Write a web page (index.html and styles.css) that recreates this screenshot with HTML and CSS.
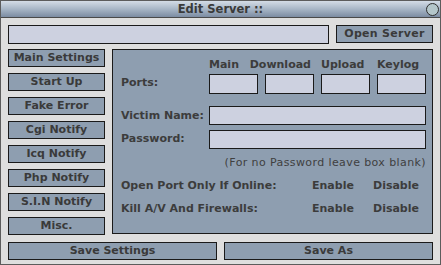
FILE: index.html
```html
<!DOCTYPE html>
<html lang="en">
<head>
  <meta charset="UTF-8" />
  <title>Edit Server</title>
  <link rel="stylesheet" href="styles.css">
</head>
<body>
  <div class="window">
    <!-- title bar -->
    <div class="titlebar">
      <span></span>
      <span class="title">Edit Server ::</span>
      <span class="close"></span>
    </div>

    <div class="content">
      <div class="row top-row">
        <div class="field path"></div>
        <div class="btn open-btn">Open Server</div>
      </div>

      <div class="row middle">
        <div class="menu">
          <div class="btn">Main Settings</div>
          <div class="btn">Start Up</div>
          <div class="btn">Fake Error</div>
          <div class="btn">Cgi Notify</div>
          <div class="btn">Icq Notify</div>
          <div class="btn">Php Notify</div>
          <div class="btn">S.I.N Notify</div>
          <div class="btn">Misc.</div>
        </div>

        <div class="panel">
          <div class="form-row heads">
            <span></span>
            <div class="ports">
              <span>Main</span>
              <span class="wide">Download</span>
              <span>Upload</span>
              <span>Keylog</span>
            </div>
          </div>
          <div class="form-row port-row">
            <span class="label">Ports:</span>
            <div class="ports">
              <div class="field"></div>
              <div class="field"></div>
              <div class="field"></div>
              <div class="field"></div>
            </div>
          </div>
          <div class="form-row victim-row">
            <span class="label">Victim Name:</span>
            <div class="field"></div>
          </div>
          <div class="form-row pass-row">
            <span class="label">Password:</span>
            <div class="field"></div>
          </div>
          <div class="note">(For no Password leave box blank)</div>
          <div class="option first">
            <span>Open Port Only If Online:</span>
            <span>Enable</span>
            <span>Disable</span>
          </div>
          <div class="option">
            <span>Kill A/V And Firewalls:</span>
            <span>Enable</span>
            <span>Disable</span>
          </div>
        </div>
      </div>

      <div class="row bottom-row">
        <div class="btn">Save Settings</div>
        <div class="btn">Save As</div>
      </div>
    </div>
  </div>
</body>
</html>
```

FILE: styles.css
```css
html, body {
  margin: 0;
  padding: 0;
  background: #dedede;
  font-family: "DejaVu Sans", Verdana, sans-serif;
  font-size: 11px;
  font-weight: bold;
  color: #3c3c3c;
}

.window {
  width: 441px;
  height: 265px;
  box-sizing: border-box;
  border: 1px solid #5c5c5c;
  border-top: none;
  background: #dedede;
  display: flex;
  flex-direction: column;
}

.titlebar {
  height: 16px;
  border-top: 1px solid #5c5c5c;
  border-bottom: 1px solid #4a4a4a;
  background: linear-gradient(#d4dce6, #a8b6c6 50%, #7c8ca2);
  display: grid;
  grid-template-columns: 1fr auto 1fr;
  align-items: center;
}

.title {
  font-size: 11.5px;
  color: #3a3a3a;
  line-height: 16px;
}

.close {
  justify-self: end;
  width: 11px;
  height: 11px;
  margin-right: 1px;
  border: 1px solid #2e2e2e;
  border-radius: 50%;
  background: #b4c6ca;
}

.content {
  padding: 7px 5px 0 7px;
  display: flex;
  flex-direction: column;
}

.row {
  display: flex;
  gap: 7px;
}

.field {
  box-sizing: border-box;
  border: 1px solid #1a1a1a;
  background: #cdd1e0;
}

.btn {
  box-sizing: border-box;
  height: 18px;
  border: 1px solid #1a1a1a;
  background: #8e9eb0;
  color: #3a3a3a;
  text-align: center;
  line-height: 16px;
}

.top-row .path {
  width: 321px;
  height: 19px;
}

.open-btn {
  width: 97px;
  letter-spacing: 0.3px;
}

.middle {
  margin-top: 5px;
}

.menu {
  width: 97px;
  display: flex;
  flex-direction: column;
  gap: 6px;
}

.panel {
  width: 321px;
  height: 185px;
  box-sizing: border-box;
  border: 1px solid #1a1a1a;
  background: #8e9eb0;
  padding: 8px 6px 0 8px;
}

.form-row {
  display: grid;
  grid-template-columns: 88px 1fr;
  align-items: center;
}

.ports {
  display: grid;
  grid-template-columns: repeat(4, 49px);
  gap: 7px;
}

.heads {
  line-height: 14px;
}

.heads .wide {
  justify-self: end;
  margin-right: 3px;
  white-space: nowrap;
}

.port-row {
  margin-top: 2px;
}

.port-row .label {
  margin-top: -3px;
}

.port-row .field {
  height: 20px;
}

.victim-row {
  margin-top: 12px;
}

.victim-row .field,
.pass-row .field {
  height: 19px;
}

.pass-row {
  margin-top: 5px;
}

.pass-row .label {
  margin-top: -3px;
}

.note {
  text-align: right;
  font-weight: normal;
  letter-spacing: 0.4px;
  margin-top: 7px;
  line-height: 14px;
  color: #404040;
}

.option {
  display: grid;
  grid-template-columns: 191px 61px auto;
  line-height: 14px;
  margin-top: 9px;
}

.option.first {
  margin-top: 9px;
}

.bottom-row {
  margin-top: 7px;
}

.bottom-row .btn {
  width: 209px;
}
```
